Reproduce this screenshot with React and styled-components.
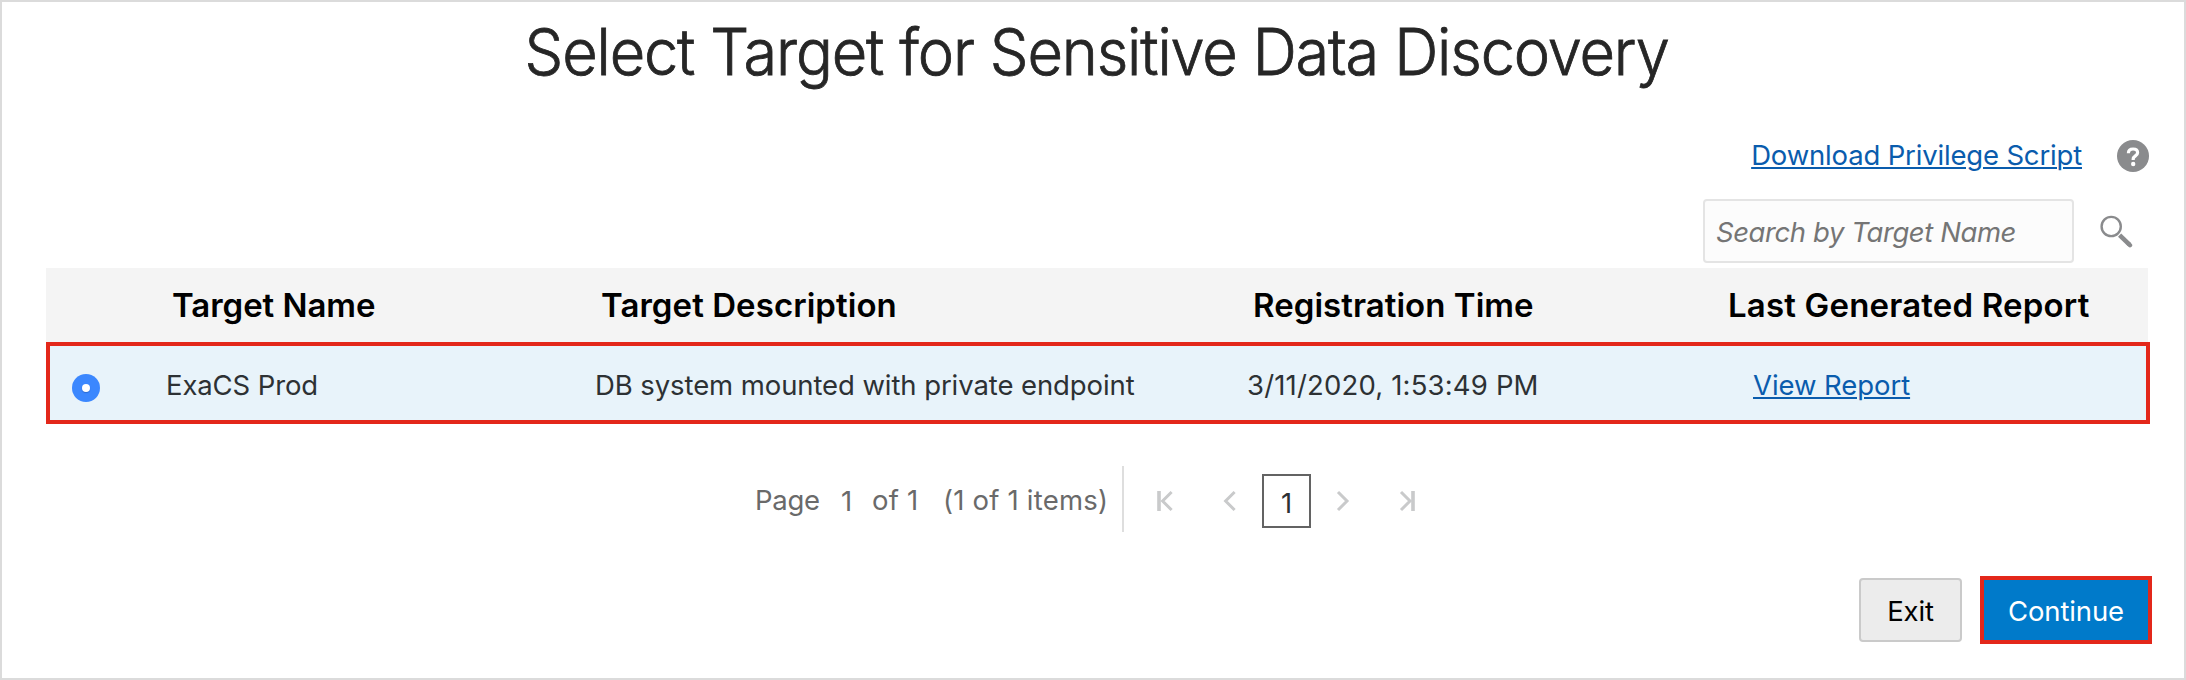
import React from 'react';
import styled, { createGlobalStyle } from 'styled-components';

const GlobalStyle = createGlobalStyle`
  * { box-sizing: border-box; }
  body {
    margin: 0;
    background: #fff;
    font-family: Inter, "Liberation Sans", sans-serif;
    font-size: 27.5px;
    line-height: 34px;
    color: #2d3134;
  }
`;

const Page = styled.main`
  width: 2186px;
  height: 680px;
  border: 2px solid #dbdbdb;
  padding: 0 32px 0 44px;
  display: flex;
  flex-direction: column;
  overflow: hidden;
`;

const Title = styled.h1`
  margin: 0;
  display: flex;
  justify-content: center;
  font-size: 64.5px;
  font-weight: 300;
  line-height: 101px;
  color: #262626;
  white-space: nowrap;

  span {
    letter-spacing: -1.22px;
    -webkit-text-stroke: 0.8px #262626;
    transform: translateX(-2.5px) scaleX(0.95);
  }
`;

const Toolbar = styled.div`
  display: flex;
  justify-content: flex-end;
  align-items: center;
  height: 42px;
  margin-top: 32px;
  padding-right: 3px;
  gap: 35px;
`;

const Link = styled.a`
  color: #0a5cad;
  letter-spacing: ${(p) => p.$tracking || 0}px;
  text-decoration: underline;
  text-decoration-thickness: 2px;
  text-underline-offset: 2px;
  margin-bottom: ${(p) => p.$lift || 0}px;
  white-space: nowrap;
`;

const SearchRow = styled.div`
  display: flex;
  justify-content: flex-end;
  align-items: center;
  height: 64px;
  margin-top: 22px;
  padding-right: 19px;
  gap: 26px;
`;

const SearchInput = styled.input`
  width: 371px;
  height: 64px;
  border: 2px solid #e4e4e4;
  border-radius: 4px;
  background: #fcfcfc;
  padding: 1px 10px 0 11px;
  font: italic 27.5px Inter, "Liberation Sans", sans-serif;
  letter-spacing: -0.42px;

  &::placeholder {
    color: #757575;
    opacity: 1;
  }
`;

const Table = styled.div`
  margin-top: 5px;
  width: 2104px;
`;

const HeaderRow = styled.div`
  display: grid;
  grid-template-columns: 106px 429px 652px 475px 1fr;
  align-items: center;
  width: 2102px;
  height: 74px;
  background: #f4f4f4;
`;

const HeaderCell = styled.div`
  grid-column: ${(p) => p.$column};
  padding-left: 20px;
  font-size: 33px;
  font-weight: 600;
  letter-spacing: ${(p) => p.$tracking || 0}px;
  color: #000;
  white-space: nowrap;
`;

const DataRow = styled.div`
  display: grid;
  grid-template-columns: 102px 429px 652px 475px 1fr;
  align-items: center;
  height: 82px;
  border: 4px solid #e3271a;
  background: #e8f3fa;
`;

const Cell = styled.div`
  padding: 4px 0 0 ${(p) => p.$inset || 14}px;
  letter-spacing: ${(p) => p.$tracking || 0}px;
  white-space: nowrap;
`;

const RadioCell = styled.div`
  padding: 10px 0 0 22px;
  display: flex;
`;

const Radio = styled.span`
  width: 28px;
  height: 28px;
  border-radius: 50%;
  background: #3b87fe;
  display: flex;
  align-items: center;
  justify-content: center;

  &::after {
    content: '';
    width: 8px;
    height: 8px;
    border-radius: 50%;
    background: #fff;
    box-shadow: 0 1px 1px rgba(0, 40, 110, 0.3);
  }
`;

const Pager = styled.nav`
  display: flex;
  align-items: center;
  height: 66px;
  margin-top: 42px;
  padding-left: 709px;
  color: #6a6a6a;
`;

const PagerText = styled.span`
  width: ${(p) => p.$width}px;
  padding-top: ${(p) => p.$drop || 2}px;
  letter-spacing: ${(p) => p.$tracking || 0}px;
  white-space: nowrap;
`;

const PagerDivider = styled.span`
  width: 2px;
  height: 66px;
  background: #dedede;
`;

const PagerArrow = styled.svg`
  width: 20px;
  height: 24px;
  margin-left: ${(p) => p.$gap}px;
  margin-top: 3px;
  fill: none;
  stroke: #c9cacb;
  stroke-width: 3;
`;

const CurrentPage = styled.span`
  width: 49px;
  height: 54px;
  margin: 4px 0 0 22px;
  padding: 3px 0 0 0;
  border: 2px solid #636363;
  display: flex;
  align-items: center;
  justify-content: center;
  color: #2d3134;
`;

const Actions = styled.footer`
  display: flex;
  justify-content: flex-end;
  align-items: center;
  height: 68px;
  margin-top: 44px;
  gap: 18px;
`;

const Button = styled.button`
  width: 103px;
  height: 64px;
  padding: 2px 0 0;
  border: 2px solid #cacaca;
  border-radius: 4px;
  background: #ececec;
  color: #000;
  font: 27.5px Inter, "Liberation Sans", sans-serif;
  letter-spacing: -0.15px;
`;

const PrimaryButton = styled(Button)`
  width: 172px;
  height: 68px;
  border: 4px solid #e3271a;
  border-radius: 0;
  background: #007aca;
  color: #fff;
`;

const HelpIcon = () => (
  <svg width="32" height="32" viewBox="0 0 32 32">
    <circle cx="16" cy="16" r="16" fill="#8a8b8d" />
    <path d="M11.4 13.2c0-2.7 1.8-4.2 4.7-4.2 2.7 0 4.5 1.5 4.5 3.7 0 3.2-4.4 3.2-4.4 6.4v.8" fill="none" stroke="#fff" strokeWidth="3.2" />
    <circle cx="16.2" cy="24" r="2.2" fill="#fff" />
  </svg>
);

const SearchIcon = () => (
  <svg width="33" height="33" viewBox="0 0 33 33" fill="none" stroke="#8a8b8d">
    <circle cx="11.2" cy="11.5" r="9.6" strokeWidth="2.4" />
    <path d="M19.6 20.2 29.2 29.4" strokeWidth="4.6" />
    <path d="M28.8 29 30 30.2" strokeWidth="4.4" strokeLinecap="round" />
  </svg>
);

export default function App() {
  return (
    <>
      <GlobalStyle />
      <Page>
        <Title><span>Select Target for Sensitive Data Discovery</span></Title>
        <Toolbar>
          <Link $tracking={-0.17} $lift={3}>Download Privilege Script</Link>
          <HelpIcon />
        </Toolbar>
        <SearchRow>
          <SearchInput placeholder="Search by Target Name" />
          <SearchIcon />
        </SearchRow>
        <Table>
          <HeaderRow>
            <HeaderCell $column={2} $tracking={-0.05}>Target Name</HeaderCell>
            <HeaderCell $column={3} $tracking={0.06}>Target Description</HeaderCell>
            <HeaderCell $column={4} $tracking={0.04}>Registration Time</HeaderCell>
            <HeaderCell $column={5} $tracking={0.18}>Last Generated Report</HeaderCell>
          </HeaderRow>
          <DataRow>
            <RadioCell><Radio /></RadioCell>
            <Cell $tracking={-0.12}>ExaCS Prod</Cell>
            <Cell $tracking={-0.09}>DB system mounted with private endpoint</Cell>
            <Cell $tracking={0.17}>3/11/2020, 1:53:49 PM</Cell>
            <Cell $inset={45}><Link $tracking={-0.07}>View Report</Link></Cell>
          </DataRow>
        </Table>
        <Pager>
          <PagerText $width={86} $tracking={-0.29}>Page</PagerText>
          <PagerText $width={31} $drop={4}>1</PagerText>
          <PagerText $width={71} $tracking={0.2}>of 1</PagerText>
          <PagerText $width={179} $tracking={0.2}>(1 of 1 items)</PagerText>
          <PagerDivider />
          <PagerArrow $gap={31} viewBox="0 0 20 24">
            <path d="M4 2v20" strokeWidth="3.6" />
            <path d="M16.6 3 7.6 12l9 9" />
          </PagerArrow>
          <PagerArrow $gap={45} viewBox="0 0 20 24">
            <path d="M14.6 3 5.6 12l9 9" />
          </PagerArrow>
          <CurrentPage>1</CurrentPage>
          <PagerArrow $gap={22} viewBox="0 0 20 24">
            <path d="M5 3l9 9-9 9" />
          </PagerArrow>
          <PagerArrow $gap={44} viewBox="0 0 20 24">
            <path d="M4 3l9 9-9 9" />
            <path d="M16 2v20" strokeWidth="3.6" />
          </PagerArrow>
        </Pager>
        <Actions>
          <Button>Exit</Button>
          <PrimaryButton>Continue</PrimaryButton>
        </Actions>
      </Page>
    </>
  );
}
